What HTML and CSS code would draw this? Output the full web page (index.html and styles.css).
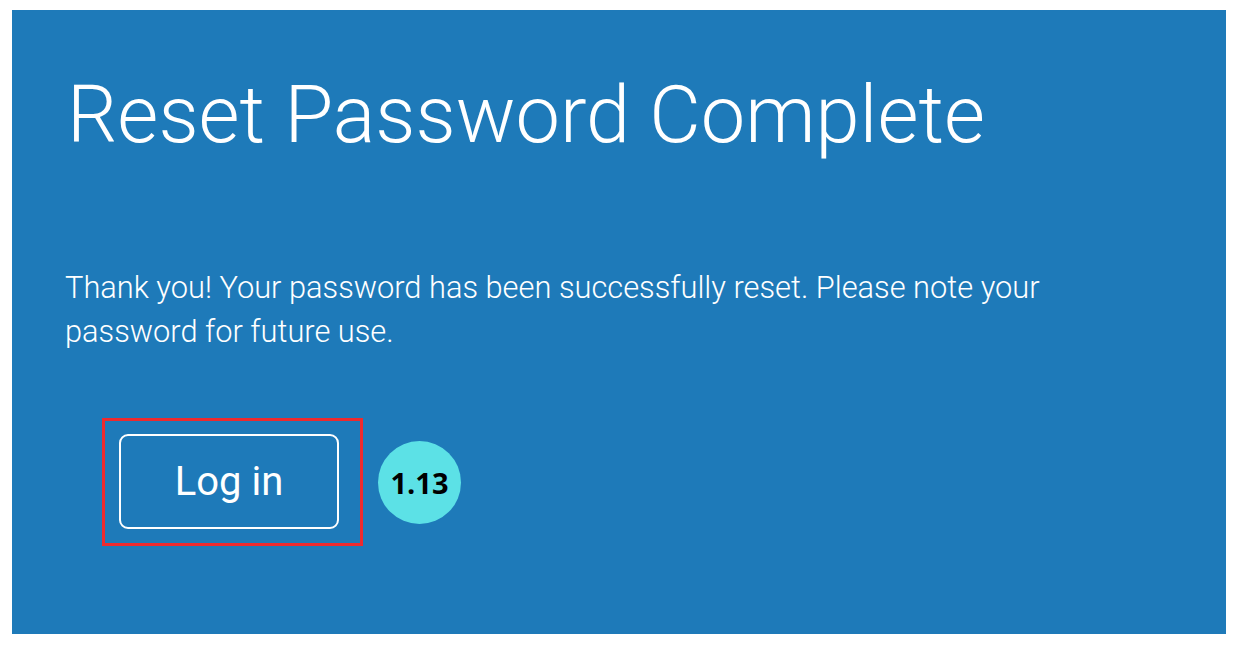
FILE: index.html
```html
<!DOCTYPE html>
<html>
<head>
<meta charset="utf-8">
<link rel="stylesheet" href="styles.css">
</head>
<body>
<main class="panel">
  <h1 class="title">Reset Password Complete</h1>
  <p class="message">Thank you! Your password has been successfully reset. Please note your password for future use.</p>
  <div class="actions">
    <div class="highlight">
      <button class="login-btn">Log in</button>
    </div>
    <div class="badge">1.13</div>
  </div>
</main>
</body>
</html>
```
FILE: styles.css
```css
html, body {
  margin: 0;
  padding: 0;
  background: #ffffff;
}
body {
  padding: 10px 19px 16px 12px;
  font-family: Roboto, "Liberation Sans", sans-serif;
}
.panel {
  background: #1e7ab9;
  height: 624px;
  box-sizing: border-box;
  padding: 60px 40px 0 55px;
  color: #ffffff;
}
.title {
  margin: 0;
  font-weight: 300;
  font-size: 79.3px;
  line-height: 90px;
}
.message {
  margin: 106px 0 0 -2px;
  width: 1080px;
  font-weight: 300;
  font-size: 30.8px;
  line-height: 44px;
}
.actions {
  display: flex;
  align-items: center;
  margin-top: 64px;
  margin-left: 35px;
  gap: 15px;
}
.highlight {
  border: 3px solid #ee2a2e;
  padding: 13px 21px 14px 14px;
}
.login-btn {
  display: block;
  width: 220px;
  height: 95px;
  border: 2px solid #ffffff;
  border-radius: 9px;
  background: transparent;
  color: #ffffff;
  font-family: Roboto, "Liberation Sans", sans-serif;
  font-size: 40px;
  font-weight: 400;
  padding: 0;
}
.badge {
  width: 83px;
  height: 83px;
  border-radius: 50%;
  background: #5ce1e6;
  color: #000000;
  display: flex;
  align-items: center;
  justify-content: center;
  font-family: "Open Sans", "Noto Sans", sans-serif;
  font-weight: 700;
  font-size: 29px;
  margin-top: 0;
}
```
